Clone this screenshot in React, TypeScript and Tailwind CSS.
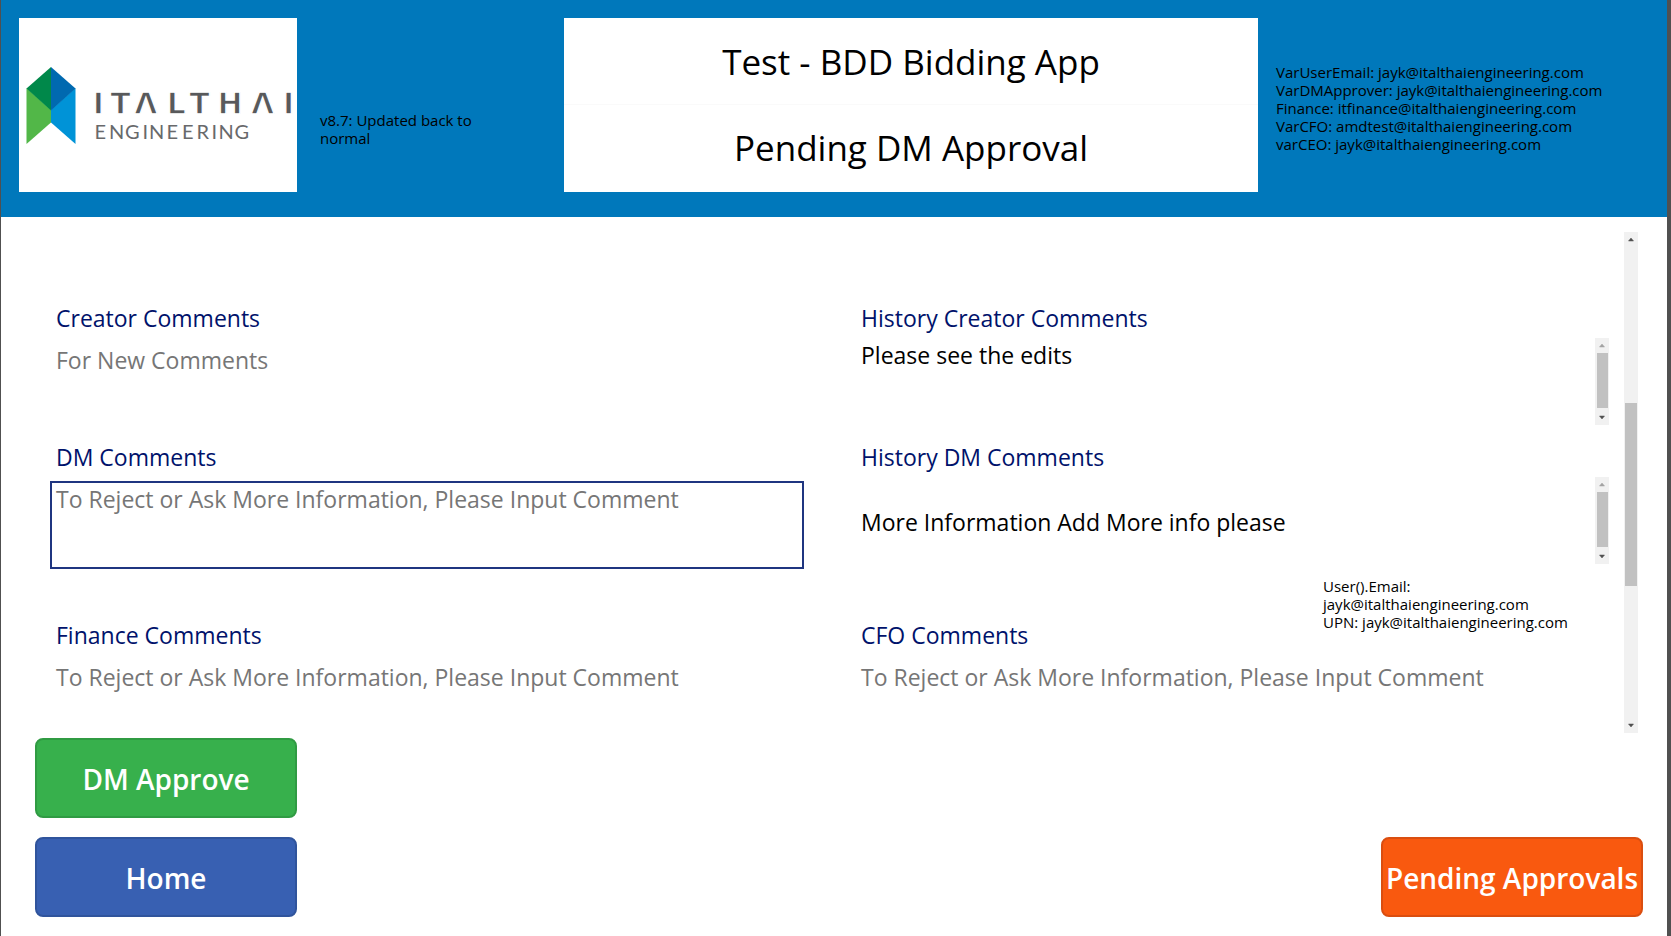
import { useId } from "react";
import type { ReactNode } from "react";

function Logo() {
  return (
    <svg viewBox="0 0 278 174" className="block h-full w-full" role="img" aria-label="Italthai Engineering">
      <polygon points="7.5,70 32,92 32,104.500 7.5,126" fill="#52b748" />
      <polygon points="56.5,70 32,92 32,104.500 56.5,126" fill="#0093d7" />
      <polygon points="32,49 7.5,70.5 32,92.500" fill="#00884a" />
      <polygon points="32,49 56.5,70.5 32,92.500" fill="#0069b0" />
      <text
        x="73.700 91.300 115.300 147.700 170.300 198.400 232 264"
        y="95.500"
        fill="#58595b"
        stroke="#fff"
        strokeWidth="1.300"
        fontFamily="DejaVu Sans, sans-serif"
        fontWeight="700"
        fontSize="30"
      >
        ITΛLTHΛI
      </text>
      <text
        x="75.500 90 106 123.500 130 147.500 163 177.500 192.500 199.500 215.500"
        y="120.500"
        fill="#68696b"
        fontFamily="Lato, sans-serif"
        fontSize="20"
      >
        ENGINEERING
      </text>
    </svg>
  );
}

function Arrow({ down = false, muted = false }: { down?: boolean; muted?: boolean }) {
  return (
    <svg viewBox="0 0 14 15" className={muted ? "h-[15px] w-full text-[#a3a3a3]" : "h-[15px] w-full text-[#505050]"} aria-hidden="true">
      <path d={down ? "M4.500 6h5L7 9z" : "M4.500 9h5L7 6z"} fill="currentColor" stroke="currentColor" strokeWidth="0.500" />
    </svg>
  );
}

function FieldScrollbar() {
  return (
    <div className="flex w-[14px] shrink-0 flex-col items-center bg-[#f1f1f1]" aria-hidden="true">
      <Arrow muted />
      <div className="w-[11px] flex-1 bg-[#c1c1c1]" />
      <div className="pt-[2px]">
        <Arrow down />
      </div>
    </div>
  );
}

function CommentBox({ label, placeholder, active = false }: { label: string; placeholder: string; active?: boolean }) {
  const id = useId();
  return (
    <div className="flex flex-col">
      <label htmlFor={id} className="px-[6px] text-[23px] leading-8 text-[#00126b]">
        {label}
      </label>
      <textarea
        id={id}
        disabled={!active}
        placeholder={placeholder}
        className={
          active
            ? "mt-2 h-[88px] w-full resize-none border-2 border-[#1f3580] bg-white px-1 text-[23px] leading-8 outline-none placeholder:text-[#767676]"
            : "mt-2 h-[88px] w-full resize-none border-2 border-transparent bg-white px-1 text-[23px] leading-8 outline-none placeholder:text-[#767676]"
        }
      />
    </div>
  );
}

function HistoryBox({ label, children }: { label: string; children: ReactNode }) {
  return (
    <section>
      <h2 className="px-[6px] text-[23px] leading-8 text-[#00126b]">{label}</h2>
      <div className="mt-1 flex h-[87px]">
        <div className="flex-1 px-[6px] pt-[3px] text-[23px] leading-7 text-black">{children}</div>
        <FieldScrollbar />
      </div>
    </section>
  );
}

const variables = [
  "VarUserEmail: jayk@italthaiengineering.com",
  "VarDMApprover: jayk@italthaiengineering.com",
  "Finance: itfinance@italthaiengineering.com",
  "VarCFO: amdtest@italthaiengineering.com",
  "varCEO: jayk@italthaiengineering.com",
];

export default function App() {
  return (
    <div className="flex min-h-screen flex-col border-r-4 border-l border-r-[#505050] border-l-[#505050] bg-white font-['Open_Sans',sans-serif] text-black">
      <header className="flex h-[217px] items-start bg-[#0078bb] pt-[18px] pl-[18px]">
        <div className="h-[174px] w-[278px] shrink-0 bg-white">
          <Logo />
        </div>
        <p className="w-[267px] shrink-0 pt-[93px] pr-20 pl-[23px] text-[15px] leading-[18px]">
          v8.7: Updated back to normal
        </p>
        <div className="grid h-[174px] flex-1 grid-rows-2 bg-white text-center text-[35px]">
          <h1 className="flex items-center justify-center border-b border-[#fafafa] pt-[3px]">Test - BDD Bidding App</h1>
          <p className="flex items-center justify-center">Pending DM Approval</p>
        </div>
        <ul className="w-[409px] shrink-0 pt-[45px] pl-[18px] text-[15px] leading-[18px]">
          {variables.map((line) => (
            <li key={line}>{line}</li>
          ))}
        </ul>
      </header>

      <main className="relative mt-[15px] mr-[29px] flex h-[501px] overflow-hidden">
        <div className="grid flex-1 grid-cols-2 grid-rows-[139px_178px_139px] gap-x-[51px] pt-[70px] pr-[15px] pl-[49px]">
          <CommentBox label="Creator Comments" placeholder="For New Comments" />
          <HistoryBox label="History Creator Comments">Please see the edits</HistoryBox>
          <CommentBox label="DM Comments" placeholder="To Reject or Ask More Information, Please Input Comment" active />
          <HistoryBox label="History DM Comments">
            <br />
            More Information Add More info please
          </HistoryBox>
          <CommentBox label="Finance Comments" placeholder="To Reject or Ask More Information, Please Input Comment" />
          <CommentBox label="CFO Comments" placeholder="To Reject or Ask More Information, Please Input Comment" />
        </div>
        <div className="flex w-[14px] shrink-0 flex-col items-center bg-[#f1f1f1]" aria-hidden="true">
          <Arrow />
          <div className="flex-[156]" />
          <div className="w-3 flex-[183] bg-[#c1c1c1]" />
          <div className="flex-[132]" />
          <Arrow down />
        </div>
        <p className="absolute top-[345px] right-[65px] w-[250px] text-[15px] leading-[18px]">
          User().Email: jayk@italthaiengineering.com
          <br />
          UPN: jayk@italthaiengineering.com
        </p>
      </main>

      <footer className="mt-[5px] flex items-end justify-between pr-6 pb-[19px] pl-[34px]">
        <div className="flex w-[262px] flex-col gap-[19px]">
          <button type="button" className="h-20 rounded-lg border-2 border-[#309b43] bg-[#37b04c] pt-[2px] text-[28px] font-semibold text-white">
            DM Approve
          </button>
          <button type="button" className="h-20 rounded-lg border-2 border-[#30549c] bg-[#3860b2] pt-[2px] text-[28px] font-semibold text-white">
            Home
          </button>
        </div>
        <button type="button" className="h-20 w-[262px] rounded-lg border-2 border-[#da4e10] bg-[#f9590f] pt-[2px] text-[28px] font-semibold whitespace-nowrap text-white">
          Pending Approvals
        </button>
      </footer>
    </div>
  );
}
